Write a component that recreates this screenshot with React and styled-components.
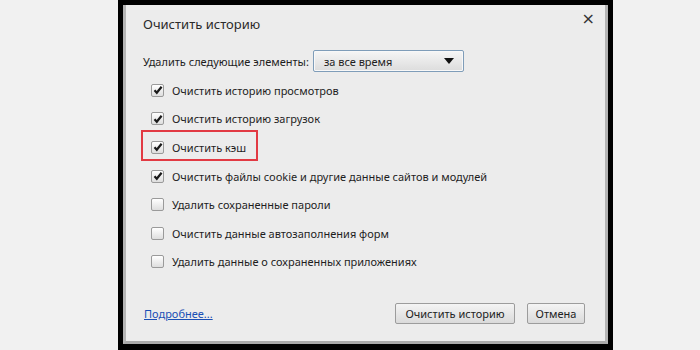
import React from "react"
import styled, { createGlobalStyle } from "styled-components"

const GlobalStyle = createGlobalStyle`
  html, body {
    margin: 0;
    padding: 0;
    background: #f1f1f1;
  }
  body {
    font-family: "Noto Sans", "Open Sans", sans-serif;
    color: #1e1e1e;
  }
`

const options = [
  { label: "Очистить историю просмотров", checked: true },
  { label: "Очистить историю загрузок", checked: true },
  { label: "Очистить кэш", checked: true, marked: true },
  { label: "Очистить файлы cookie и другие данные сайтов и модулей", checked: true },
  { label: "Удалить сохраненные пароли" },
  { label: "Очистить данные автозаполнения форм" },
  { label: "Удалить данные о сохраненных приложениях" },
]

const Page = () => (
  <Stage>
    <Frame>
      <Dialog>
        <Header>
          <Title>Очистить историю</Title>
          <Close>×</Close>
        </Header>
        <RangeRow>
          <span>Удалить следующие элементы:</span>
          <Select>
            <span>за все время</span>
            <svg width="10" height="6" viewBox="0 0 10 6">
              <path d="M0 0h10L5 6z" fill="#111" />
            </svg>
          </Select>
        </RangeRow>
        <List>
          {options.map(o => (
            <Option key={o.label} $marked={o.marked}>
              <Box>
                {o.checked && (
                  <svg width="10" height="10" viewBox="0 0 10 10">
                    <path d="M1.5 5.2l2.3 2.6L8.6 1.8" fill="none" stroke="#1a1a1a" strokeWidth="2.2" />
                  </svg>
                )}
              </Box>
              <span>{o.label}</span>
            </Option>
          ))}
        </List>
        <Footer>
          <More href="#">Подробнее...</More>
          <Buttons>
            <Button $w={120}>Очистить историю</Button>
            <Button $w={58}>Отмена</Button>
          </Buttons>
        </Footer>
      </Dialog>
    </Frame>
  </Stage>
)

const Stage = styled.div`
  width: 700px;
  height: 350px;
  overflow: hidden;
`

const Frame = styled.div`
  box-sizing: border-box;
  width: 495px;
  height: 350px;
  margin-left: 118px;
  background: #000;
  padding: 5px 5px 6px 5px;
`

const Dialog = styled.div`
  box-sizing: border-box;
  height: 100%;
  background: #ececec;
  border-left: 3px solid #b4b4b4;
  border-right: 3px solid #b4b4b4;
  border-bottom: 3px solid #a9a9a9;
  padding: 0 0 0 17px;
  display: flex;
  flex-direction: column;
  font-size: 11px;
`

const Header = styled.div`
  display: flex;
  justify-content: space-between;
  align-items: flex-start;
  height: 43px;
  padding-right: 10px;
`

const Title = styled.div`
  font-size: 13px;
  padding-top: 10px;
  color: #2a2a2a;
`

const Close = styled.div`
  font-size: 16px;
  padding-top: 4px;
  color: #333;
  font-family: "DejaVu Sans", sans-serif;
`

const RangeRow = styled.div`
  display: flex;
  align-items: center;
  gap: 4px;
  height: 26px;
  margin-bottom: 2px;
`

const Select = styled.div`
  box-sizing: border-box;
  width: 151px;
  height: 22px;
  display: flex;
  align-items: center;
  justify-content: space-between;
  padding: 0 9px 0 10px;
  border: 1px solid #7f9db9;
  border-radius: 2px;
  background: linear-gradient(#f6f6f6, #dcdcdc);
  box-shadow: inset 0 0 0 1px #f8f8f8;
`

const List = styled.div`
  display: flex;
  flex-direction: column;
  padding-left: 8px;
`

const Option = styled.div`
  position: relative;
  display: flex;
  align-items: center;
  gap: 8px;
  height: 28.6px;

  &::after {
    content: "";
    display: ${p => (p.$marked ? "block" : "none")};
    position: absolute;
    left: -10px;
    top: -3px;
    width: 117px;
    height: 31px;
    box-sizing: border-box;
    border: 2px solid #e23a43;
  }
`

const Box = styled.div`
  box-sizing: border-box;
  width: 13px;
  height: 13px;
  border: 1px solid #9a9a9a;
  border-radius: 2px;
  background: linear-gradient(#ffffff, #dedede);
  display: flex;
  align-items: center;
  justify-content: center;
`

const Footer = styled.div`
  margin-top: auto;
  display: flex;
  align-items: center;
  justify-content: space-between;
  padding: 0 20px 17px 1px;
`

const More = styled.a`
  color: #1a4fb5;
  text-decoration: underline;
`

const Buttons = styled.div`
  display: flex;
  gap: 12px;
`

const Button = styled.button`
  box-sizing: border-box;
  width: ${p => p.$w}px;
  height: 21px;
  font: inherit;
  font-size: 11px;
  color: #222;
  border: 1px solid #9c9c9c;
  border-radius: 2px;
  background: linear-gradient(#f4f4f4, #dadada);
  padding: 0;
`

const App = () => (
  <>
    <GlobalStyle />
    <Page />
  </>
)

export default App
